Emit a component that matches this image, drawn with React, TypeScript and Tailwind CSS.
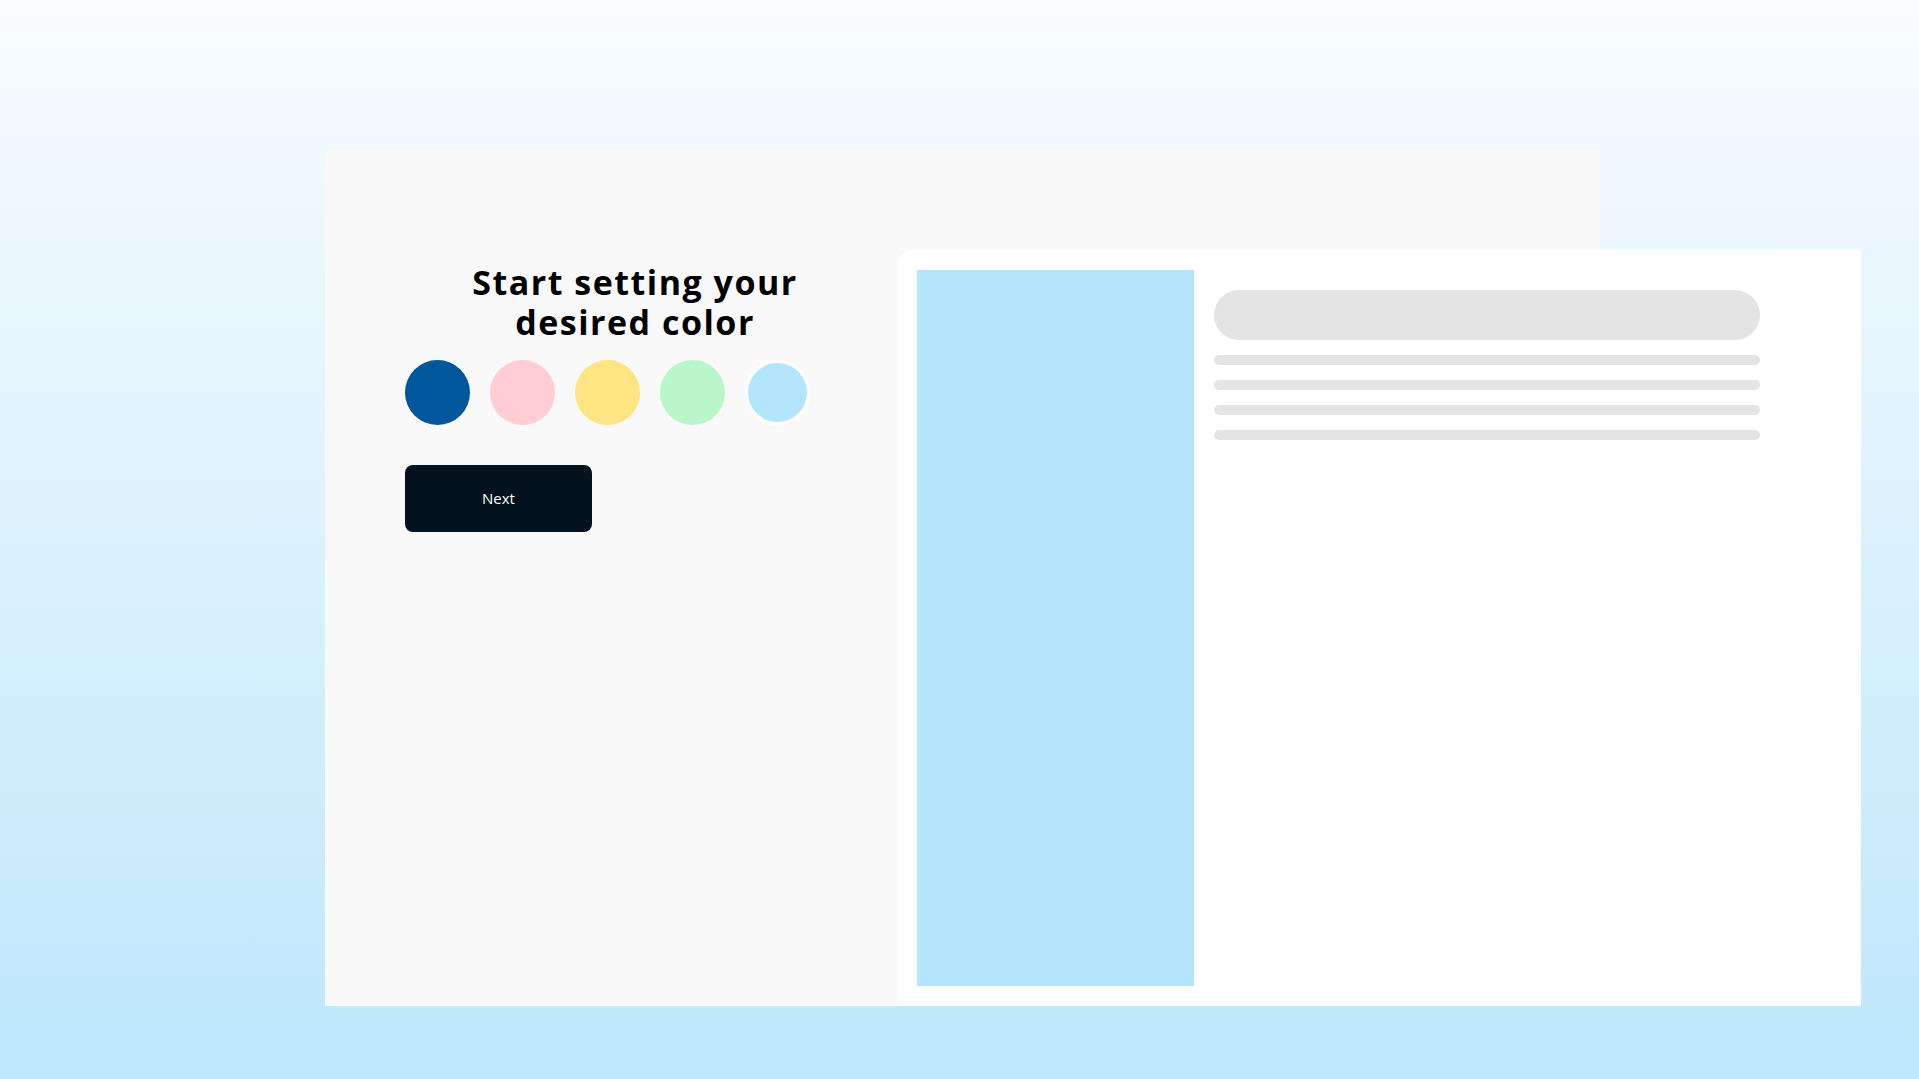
const SWATCHES = ["#01579b", "#ffcdd2", "#ffe482", "#b9f6ca", "#b3e5fc"]

function Swatch({ color, selected }: { color: string; selected?: boolean }) {
  return (
    <button
      type="button"
      className={
        "w-[65px] h-[65px] rounded-full shrink-0 " +
        (selected ? "border-[3px] border-white" : "")
      }
      style={{ backgroundColor: color }}
    />
  )
}

function Preview() {
  return (
    <div className="w-[964px] h-[756px] shrink-0 mt-[100px] ml-[32px] bg-white rounded-tl-2xl flex gap-5 p-5">
      <div className="w-[277px] h-full bg-[#b3e5fc]" />
      <div className="w-[546px] pt-5 flex flex-col gap-[15px]">
        <div className="h-[50px] rounded-full bg-[#e4e4e4]" />
        <div className="h-[10px] rounded-full bg-[#e4e4e4]" />
        <div className="h-[10px] rounded-full bg-[#e4e4e4]" />
        <div className="h-[10px] rounded-full bg-[#e4e4e4]" />
        <div className="h-[10px] rounded-full bg-[#e4e4e4]" />
      </div>
    </div>
  )
}

export default function App() {
  return (
    <div className="w-[1919px] h-[1079px] overflow-hidden bg-gradient-to-b from-[#f9fcff] to-[#bde7fb] pl-[325px] pt-[150px] font-['Open_Sans',sans-serif]">
      <div className="w-[1275px] h-[856px] bg-[#f9f9f9] flex">
        <div className="w-[460px] shrink-0 ml-[80px] pt-[112px]">
          <h1 className="text-center text-[34px] leading-[40px] font-bold tracking-[1.5px] text-black">
            <span className="block">Start setting your</span>
            <span className="block">desired color</span>
          </h1>
          <div className="flex gap-5 mt-[18px]">
            {SWATCHES.map((c, i) => (
              <Swatch key={c} color={c} selected={i === SWATCHES.length - 1} />
            ))}
          </div>
          <button
            type="button"
            className="mt-10 w-[187px] h-[67px] rounded-lg bg-[#04121e] text-white text-[15px]"
          >
            Next
          </button>
        </div>
        <Preview />
      </div>
    </div>
  )
}
